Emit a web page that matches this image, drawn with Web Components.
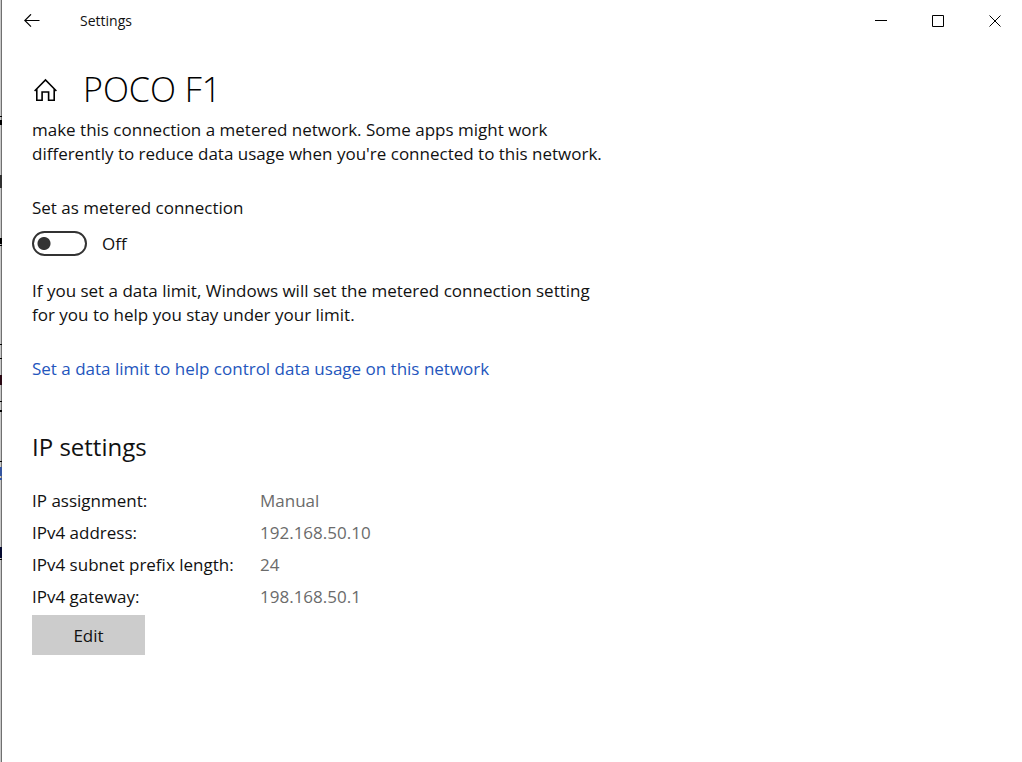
<!DOCTYPE html>
<html lang="en">
<head>
<meta charset="utf-8">
<title>Settings</title>
<style>
  html, body { margin: 0; min-height: 100%; background: #fff; }
  body { font: 17px/24px "Open Sans", "Noto Sans", sans-serif; color: #111; }
</style>
</head>
<body>
<settings-window>
  <title-bar slot="bar">Settings</title-bar>
  <page-heading slot="heading">POCO F1</page-heading>
  <metered-section></metered-section>
  <ip-settings></ip-settings>
</settings-window>
<script>
const define = (name, html) => customElements.define(name, class extends HTMLElement {
  constructor() {
    super();
    const t = document.createElement('template');
    t.innerHTML = html;
    this.attachShadow({ mode: 'open' }).append(t.content.cloneNode(true));
  }
});

define('settings-window', `
<style>
  :host { display: flex; min-height: 100vh; }
  .edge { flex: none; width: 2px; display: block; background: linear-gradient(90deg, #c8c8c8 50%, #707070 50%); }
  svg { display: block; }
  .window { flex: 1; min-width: 0; }
  main { padding: 0 30px; }
</style>
<div class="edge" aria-hidden="true"><svg width="2" height="600" shape-rendering="crispEdges">
  <path fill="#000" d="M0 116h2v1H0zM0 120h2v5H0zM0 238h2v6H0zM0 245h2v1H0zM0 344h2v1H0zM0 358h2v1H0zM0 401h2v1H0zM0 410h2v2H0zM0 461h2v1H0zM0 559h2v1H0z"/>
  <path fill="#303030" d="M0 175h2v13H0z"/><path fill="#2a0812" d="M0 375h2v10H0z"/>
  <path fill="#3555a0" d="M0 467h2v9H0zM0 478h2v2H0z"/><path fill="#050a30" d="M0 547h2v11H0z"/>
</svg></div>
<div class="window">
  <slot name="bar"></slot>
  <main><slot name="heading"></slot><slot></slot></main>
</div>`);

define('title-bar', `
<style>
  :host { display: flex; align-items: center; height: 41px; font-size: 14px; }
  button { border: 0; padding: 0; background: none; color: #000; display: grid; place-items: center; height: 40px; width: 57px; }
  .back { width: 60px; margin-right: 18px; }
  .name { flex: 1; line-height: 21px; }
  .controls { display: flex; margin-right: -1px; }
  svg { display: block; fill: none; stroke: currentColor; }
</style>
<button class="back" aria-label="Back"><svg width="16" height="14" viewBox="0 0 16 14" stroke-width="1.2"><path d="M15.5 6.500H1M7 .3 .8 6.500 7 12.700"/></svg></button>
<span class="name"><slot></slot></span>
<div class="controls">
<button aria-label="Minimize"><svg width="12" height="12"><path d="M0 5.500h12"/></svg></button>
<button aria-label="Maximize"><svg width="12" height="12"><path d="M.5 .5h11v11H.5z"/></svg></button>
<button aria-label="Close"><svg width="12" height="12"><path d="m.5 .5 11 11m0-11-11 11"/></svg></button>
</div>`);

define('page-heading', `
<style>
  :host { display: flex; align-items: center; gap: 24px; padding: 24px 0 5px; }
  a { color: #000; width: 27px; display: grid; place-items: center; }
  h1 { margin: 0; font-size: 34px; line-height: 48px; font-weight: 300; color: #000; }
</style>
<a href="#" aria-label="Home"><svg width="24" height="24" viewBox="0 0 24 24" fill="none" stroke="currentColor" stroke-width="1.6"><path d="M.6 14 11.500 3l10.900 11M2.800 12v11.200h5.300v-8.200h6.500v8.200h5.600V12"/></svg></a>
<h1><slot></slot></h1>`);

define('metered-section', `
<style>
  :host { display: block; }
  p { margin: 0; max-width: 574px; }
  .label { display: block; margin-top: 30px; }
  .row { display: flex; align-items: center; gap: 15px; margin: 11px 0 23px; height: 25px; }
  input { appearance: none; box-sizing: border-box; margin: 0; width: 55px; height: 25px; border: 2px solid #333; border-radius: 13px; background: radial-gradient(circle at 10px 50%, #333 6px, transparent 7px); }
  a { display: block; width: fit-content; margin-top: 30px; color: #2456bd; text-decoration: none; }
</style>
<p>make this connection a metered network. Some apps might work differently to reduce data usage when you're connected to this network.</p>
<label class="label" for="metered">Set as metered connection</label>
<div class="row"><input id="metered" type="checkbox" role="switch"><span>Off</span></div>
<p>If you set a data limit, Windows will set the metered connection setting for you to help you stay under your limit.</p>
<a href="#">Set a data limit to help control data usage on this network</a>`);

define('ip-settings', `
<style>
  :host { display: block; margin-top: 50px; }
  h2 { margin: 0 0 22px; font-size: 24px; line-height: 32px; font-weight: 400; }
  table { border-collapse: collapse; }
  th, td { padding: 4px 0; line-height: 24px; text-align: left; font-weight: 400; }
  th { width: 228px; }
  td { color: #6b6b6b; }
  button { display: block; margin-top: 2px; width: 113px; height: 40px; border: 0; padding: 2px 0 0; background: #ccc; color: #111; font: inherit; }
</style>
<h2>IP settings</h2>
<table>
  <tr><th scope="row">IP assignment:</th><td>Manual</td></tr>
  <tr><th scope="row">IPv4 address:</th><td>192.168.50.10</td></tr>
  <tr><th scope="row">IPv4 subnet prefix length:</th><td>24</td></tr>
  <tr><th scope="row">IPv4 gateway:</th><td>198.168.50.1</td></tr>
</table>
<button>Edit</button>`);
</script>
</body>
</html>
